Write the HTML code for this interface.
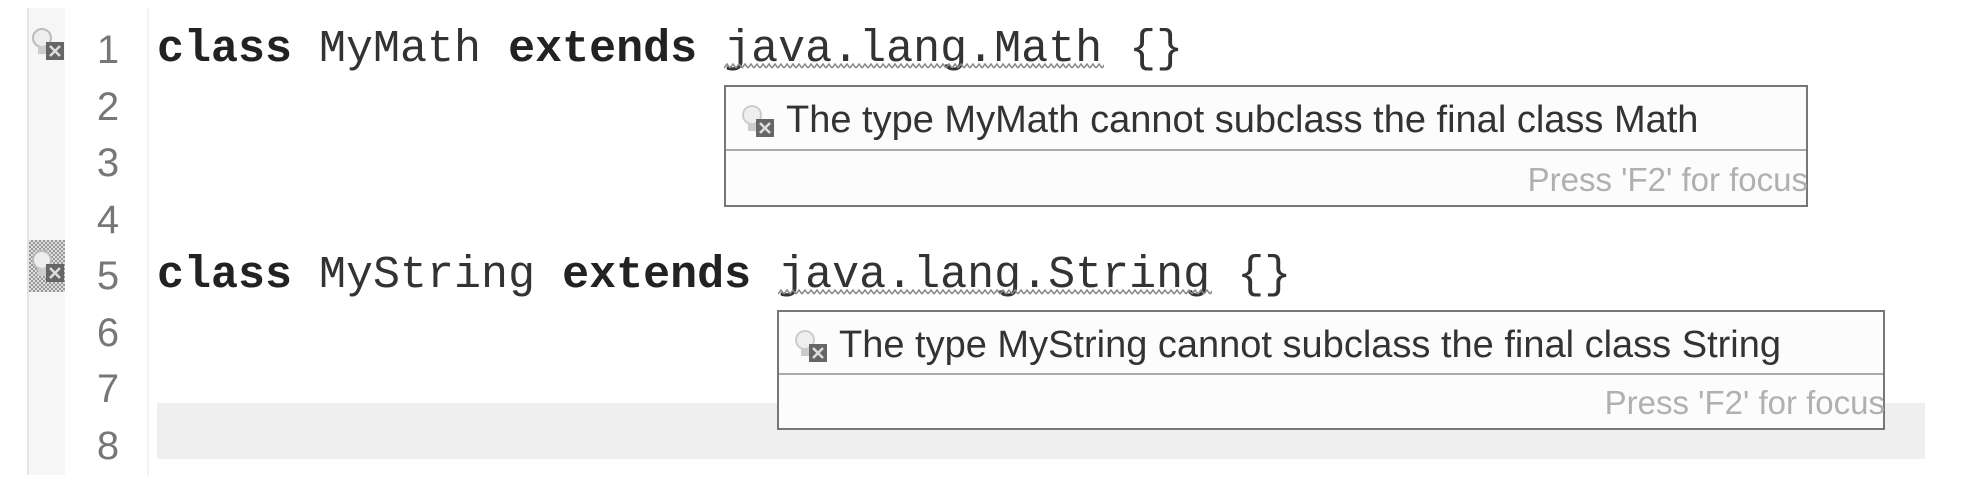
<!DOCTYPE html>
<html><head><meta charset="utf-8"><style>
body{margin:0;width:1963px;height:487px;background:#fff;position:relative;overflow:hidden;font-family:"Liberation Sans",sans-serif}
.abs{position:absolute}
.code{position:absolute;left:157px;font-family:"Liberation Mono",monospace;font-size:45px;line-height:56.5px;color:#333;white-space:pre}
.code b{color:#222}
.ln{position:absolute;left:80px;width:56px;text-align:center;font-size:40px;color:#777;line-height:56.5px}
.tip{position:absolute;background:#fcfcfc;border:2px solid #777;box-sizing:border-box}
.tip .msg{position:absolute;left:60px;font-size:38px;color:#333;white-space:nowrap}
.tip .div{position:absolute;left:0;right:0;height:2px;background:#aaa}
.tip .f2{position:absolute;right:-2px;font-size:33px;color:#b0b0b0;white-space:nowrap}
</style></head><body>
<svg width="0" height="0" style="position:absolute"><defs><pattern id="sq" width="6" height="8" patternUnits="userSpaceOnUse"><path d="M0 6 L3 2 L6 6" fill="none" stroke="#888" stroke-width="1.5"/></pattern></defs></svg>
<div class="abs" style="left:27px;top:8px;width:2px;height:467px;background:#e4e4e4"></div>
<div class="abs" style="left:29px;top:8px;width:36px;height:467px;background:#f6f6f6"></div>
<div class="abs" style="left:147px;top:8px;width:2px;height:467px;background:#f2f2f2"></div>
<div class="abs" style="left:157px;top:403px;width:1768px;height:56px;background:#efefef"></div>
<div class="abs" style="left:29px;top:240px;width:36px;height:52px;background:repeating-conic-gradient(#999 0 25%,#ddd 0 50%) 0 0/4px 4px"></div>
<svg class="abs" style="left:30px;top:26px" width="36" height="40" viewBox="0 0 36 40"><circle cx="12" cy="12" r="9" fill="#eee" stroke="#bbb" stroke-width="2"/><rect x="8" y="20" width="8" height="8" fill="#ccc"/><rect x="16" y="16" width="18" height="18" fill="#666"/><path d="M20 20l10 10M30 20l-10 10" stroke="#ddd" stroke-width="2.5"/></svg>
<svg class="abs" style="left:30px;top:248px" width="36" height="40" viewBox="0 0 36 40"><circle cx="12" cy="12" r="9" fill="#eee" stroke="#bbb" stroke-width="2"/><rect x="8" y="20" width="8" height="8" fill="#ccc"/><rect x="16" y="16" width="18" height="18" fill="#666"/><path d="M20 20l10 10M30 20l-10 10" stroke="#ddd" stroke-width="2.5"/></svg>
<div class="ln" style="top:22px">1<br>2<br>3<br>4<br>5<br>6<br>7<br>8</div>
<div class="code" style="top:22px"><b>class</b> MyMath <b>extends</b> java.lang.Math {}



<b>class</b> MyString <b>extends</b> java.lang.String {}</div>
<svg class="abs" style="left:724px;top:62px" width="380" height="8"><rect width="380" height="8" fill="url(#sq)"/></svg>
<svg class="abs" style="left:778px;top:288px" width="434" height="8"><rect width="434" height="8" fill="url(#sq)"/></svg>
<div class="tip" style="left:724px;top:85px;width:1084px;height:122px">
<svg class="abs" style="left:14px;top:16px" width="36" height="40" viewBox="0 0 36 40"><circle cx="12" cy="12" r="9" fill="#eee" stroke="#ccc" stroke-width="2"/><rect x="8" y="20" width="8" height="8" fill="#ccc"/><rect x="16" y="16" width="18" height="18" fill="#666"/><path d="M20 20l10 10M30 20l-10 10" stroke="#ddd" stroke-width="2.5"/></svg>
<div class="msg" style="top:12px">The type MyMath cannot subclass the final class Math</div>
<div class="div" style="top:62px"></div>
<div class="f2" style="top:74px">Press 'F2' for focus</div>
</div>
<div class="tip" style="left:777px;top:310px;width:1108px;height:120px">
<svg class="abs" style="left:14px;top:16px" width="36" height="40" viewBox="0 0 36 40"><circle cx="12" cy="12" r="9" fill="#eee" stroke="#ccc" stroke-width="2"/><rect x="8" y="20" width="8" height="8" fill="#ccc"/><rect x="16" y="16" width="18" height="18" fill="#666"/><path d="M20 20l10 10M30 20l-10 10" stroke="#ddd" stroke-width="2.5"/></svg>
<div class="msg" style="top:12px">The type MyString cannot subclass the final class String</div>
<div class="div" style="top:61px"></div>
<div class="f2" style="top:72px">Press 'F2' for focus</div>
</div>
</body></html>
